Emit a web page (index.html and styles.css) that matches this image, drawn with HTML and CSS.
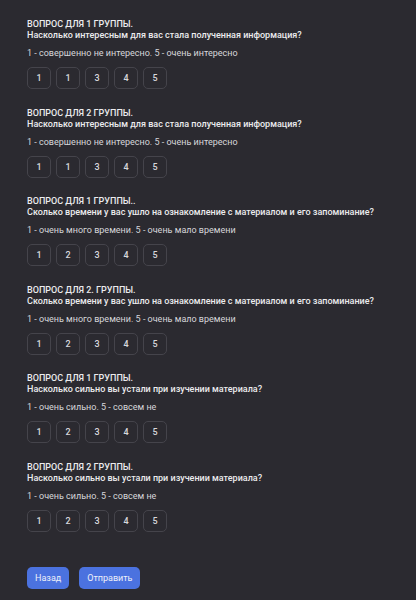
FILE: index.html
```html
<!DOCTYPE html>
<html lang="ru">
<head>
<meta charset="utf-8">
<link rel="stylesheet" href="styles.css">
</head>
<body>
<main class="page">
  <section class="q">
    <div class="title"><div>ВОПРОС ДЛЯ 1 ГРУППЫ.</div><div>Насколько интересным для вас стала полученная информация?</div></div>
    <p class="hint">1 - совершенно не интересно. 5 - очень интересно</p>
    <div class="scale"><button class="opt">1</button><button class="opt">1</button><button class="opt">3</button><button class="opt">4</button><button class="opt">5</button></div>
  </section>
  <section class="q">
    <div class="title"><div>ВОПРОС ДЛЯ 2 ГРУППЫ.</div><div>Насколько интересным для вас стала полученная информация?</div></div>
    <p class="hint">1 - совершенно не интересно. 5 - очень интересно</p>
    <div class="scale"><button class="opt">1</button><button class="opt">1</button><button class="opt">3</button><button class="opt">4</button><button class="opt">5</button></div>
  </section>
  <section class="q">
    <div class="title"><div>ВОПРОС ДЛЯ 1 ГРУППЫ..</div><div>Сколько времени у вас ушло на ознакомление с материалом и его запоминание?</div></div>
    <p class="hint">1 - очень много времени. 5 - очень мало времени</p>
    <div class="scale"><button class="opt">1</button><button class="opt">2</button><button class="opt">3</button><button class="opt">4</button><button class="opt">5</button></div>
  </section>
  <section class="q">
    <div class="title"><div>ВОПРОС ДЛЯ 2. ГРУППЫ.</div><div>Сколько времени у вас ушло на ознакомление с материалом и его запоминание?</div></div>
    <p class="hint">1 - очень много времени. 5 - очень мало времени</p>
    <div class="scale"><button class="opt">1</button><button class="opt">2</button><button class="opt">3</button><button class="opt">4</button><button class="opt">5</button></div>
  </section>
  <section class="q">
    <div class="title"><div>ВОПРОС ДЛЯ 1 ГРУППЫ.</div><div>Насколько сильно вы устали при изучении материала?</div></div>
    <p class="hint">1 - очень сильно. 5 - совсем не</p>
    <div class="scale"><button class="opt">1</button><button class="opt">2</button><button class="opt">3</button><button class="opt">4</button><button class="opt">5</button></div>
  </section>
  <section class="q">
    <div class="title"><div>ВОПРОС ДЛЯ 2 ГРУППЫ.</div><div>Насколько сильно вы устали при изучении материала?</div></div>
    <p class="hint">1 - очень сильно. 5 - совсем не</p>
    <div class="scale"><button class="opt">1</button><button class="opt">2</button><button class="opt">3</button><button class="opt">4</button><button class="opt">5</button></div>
  </section>
  <div class="nav">
    <button class="btn">Назад</button>
    <button class="btn">Отправить</button>
  </div>
</main>
</body>
</html>
```
FILE: styles.css
```css
html, body {
  margin: 0;
  padding: 0;
  background: #2b2a30;
}
body {
  font-family: Roboto, "Liberation Sans", sans-serif;
  font-size: 10px;
  color: #e6e6e8;
}
.page {
  padding: 19px 27px 12px 27px;
  display: flex;
  flex-direction: column;
  gap: 18.5px;
}
.q {
  display: flex;
  flex-direction: column;
}
.title {
  font-size: 9px;
  font-weight: 500;
  line-height: 11px;
  color: #ececee;
  white-space: nowrap;
}
.hint {
  margin: 6px 0 0 0;
  font-size: 9px;
  line-height: 12px;
  color: #d6d6da;
}
.scale {
  margin-top: 8px;
  display: flex;
  gap: 5px;
}
.opt {
  width: 24px;
  height: 22px;
  box-sizing: border-box;
  border: 1px solid #45444b;
  border-radius: 5px;
  background: transparent;
  color: #d8d8dc;
  font-family: inherit;
  font-size: 9px;
  font-weight: 500;
  padding: 0;
}
.nav {
  margin-top: 16.5px;
  display: flex;
  gap: 10px;
}
.btn {
  height: 22px;
  padding: 0 8px;
  border: none;
  border-radius: 5px;
  background: #4b72df;
  color: #eef0fa;
  font-family: inherit;
  font-size: 9px;
}
```
